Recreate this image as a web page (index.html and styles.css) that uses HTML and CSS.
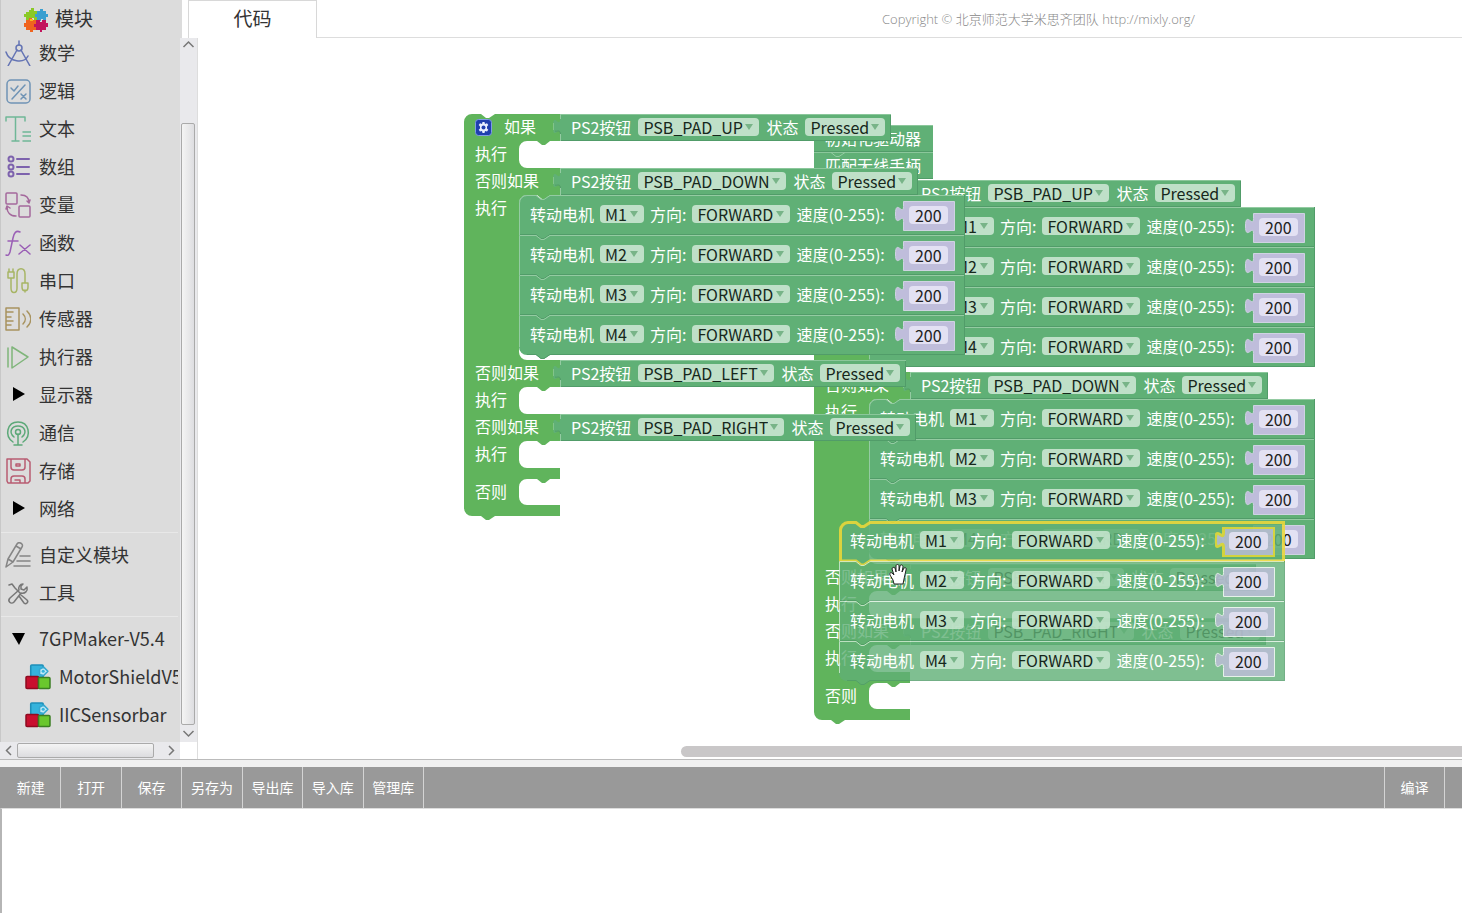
FILE: index.html
```html
<!DOCTYPE html>
<html lang="zh-CN">
<head>
<meta charset="utf-8">
<title>Mixly</title>
<link rel="stylesheet" href="styles.css">
</head>
<body>
<svg class="defs" width="0" height="0" aria-hidden="true">
  <symbol id="stmt" viewBox="0 0 446 45">
    <path class="fill" d="M0 0H17l5 4h3l6-4H446V40H31l-6 4h-3l-5-4H0z"/>
    <path class="dark" d="M445.500 0V39.500H31l-6 4h-3l-5-4H0"/>
    <path class="light" d="M.5 40V.5H17l5 4h3l6-4H445"/>
  </symbol>
  <symbol id="stmt-first" viewBox="0 0 446 45">
    <path class="fill" d="M0 8A8 8 0 0 1 8 0H17l5 4h3l6-4H446V40H31l-6 4h-3l-5-4H0z"/>
    <path class="dark" d="M445.500 0V39.500H31l-6 4h-3l-5-4H0"/>
    <path class="light" d="M.5 40V8A7.500 7.500 0 0 1 8 .5H17l5 4h3l6-4H445"/>
  </symbol>
  <symbol id="stmt-last" viewBox="0 0 446 45">
    <path class="fill" d="M0 0H17l5 4h3l6-4H446V40H31l-6 4h-3l-5-4H8A8 8 0 0 1 0 32z"/>
    <path class="dark" d="M445.500 0V39.500H31l-6 4h-3l-5-4H8"/>
    <path class="light" d="M.5 32V.5H17l5 4h3l6-4H445"/>
  </symbol>
  <symbol id="stmt-picked" viewBox="0 0 446 45">
    <path class="fill picked" d="M1.500 9A8 8 0 0 1 9 1.500H17l5 4h3l6-4H444.500V40H31l-6 4h-3l-5-4H1.500z"/>
  </symbol>
  <symbol id="num" viewBox="0 0 60 30">
    <path class="num-fill" d="M8.500.5H59.500V29.500H8.500V20.500c0-10-8 8-8-7.500s8 2.500 8-7.500z"/>
  </symbol>
  <symbol id="tab" viewBox="0 0 9 27">
    <path class="fill" d="M9 0H8V5c0 10-7-8-7 7.500s7-2.500 7 7.500V27H9z"/>
    <path class="tab-light" d="M1.500 16V9"/>
    <path class="dark" d="M3 17c2 1 5-2 5.500 3"/>
    <path class="light" d="M8.500 0V5M8.500 20V27"/>
  </symbol>
  <symbol id="cubes" viewBox="0 0 25 25">
    <rect x="5.500" y="1" width="12" height="12" rx="1" fill="#35b3dc" stroke="#1f8fb8"/>
    <path d="M14 5l4-2 4 4-4 4-4-1z" fill="#bfe9f7" stroke="#35a8d0"/>
    <circle cx="17.500" cy="7" r="1.500" fill="#35b3dc"/>
    <rect x="1" y="12" width="12" height="11.500" rx="1" fill="#c80f2e" stroke="#8f0a20"/>
    <rect x="13" y="13" width="11" height="10.500" rx="1" fill="#6ac72d" stroke="#3b7e22"/>
  </symbol>
</svg>

<div class="app">
  <header class="topbar">
    <button class="tab tab-modules" type="button">
      <svg width="26" height="26" viewBox="0 0 26 26" aria-hidden="true">
        <path d="M3 5h3V3h2V1h3v3h3v9h-3v-2H9v2H3v-3H1V7h2z" fill="#8ac926"/>
        <path d="M14 4h3V2h3v2h3v3h2v3h-2v4h-3v-2h-2v2h-4v-4h-2V7h2z" fill="#3a9fd0"/>
        <path d="M3 13h3v-2h3v2h4v4h-2v3h2v3h-3v2H7v-2H3v-3H1v-4h2z" fill="#f0641e"/>
        <path d="M13 13h4v2h2v-2h4v3h2v4h-2v3h-4v2h-2v-2h-4v-3h-2v-3h2z" fill="#c3155d"/>
        <path d="M7 12h3v2H7z" fill="#f5b81e"/>
      </svg>
      <span>模块</span>
    </button>
    <button class="tab tab-code" type="button">代码</button>
    <p class="copyright">Copyright © 北京师范大学米思齐团队 http://mixly.org/</p>
  </header>

  <main class="main">
    <aside class="sidebar">
      <nav class="toolbox" aria-label="模块">
        <ul>
          <li><a href="#"><svg class="ic" viewBox="0 0 26 26" stroke="#6474b4"><path d="M14 1v4M12 10L3 26M16 10l9 16M1 12c3 10 18 12 22 4"/><circle cx="14" cy="8" r="3"/></svg>数学</a></li>
          <li><a href="#"><svg class="ic" viewBox="0 0 26 26" stroke="#6f93b5"><rect x="2" y="2" width="23" height="23" rx="4"/><path d="M6 10l3 3 4-5M20 7L7 21M16 16l5 5M21 16l-5 5"/></svg>逻辑</a></li>
          <li><a href="#"><svg class="ic" viewBox="0 0 26 26" stroke="#6fb797"><path d="M1 5V1h19v4M10.500 1v24M7 25h7M18 16h8M18 20h8M18 25h8"/></svg>文本</a></li>
          <li><a href="#"><svg class="ic heavy" viewBox="0 0 26 26" stroke="#7d62ad"><circle cx="6" cy="5" r="2.500"/><circle cx="6" cy="13" r="2.500"/><circle cx="6" cy="20" r="2.500"/><path d="M12 5h12M12 13h12M12 20h12"/></svg>数组</a></li>
          <li><a href="#"><svg class="ic" viewBox="0 0 26 26" stroke="#a4689c"><rect x="1" y="1" width="11" height="11" rx="1"/><rect x="14" y="14" width="11" height="11" rx="1"/><path d="M16 3c5 0 8 3 8 8l-2-2M24 11l1-3M2 15c0 5 3 9 9 9M1 17l1-3 3 2"/></svg>变量</a></li>
          <li><a href="#"><svg class="ic" viewBox="0 0 26 26" stroke="#9a5fb5"><path d="M15 2c-4-2-6 1-7 6L5 22c-1 3-2 4-4 3M3 11h10M15 15l10 9M25 15l-11 9"/></svg>函数</a></li>
          <li><a href="#"><svg class="ic" viewBox="0 0 26 26" stroke="#a7b565"><path d="M3 4h6v6H3zM4 1v3M8 1v3M6 10v10c0 6 6 6 6 0V6c0-7 8-7 8 0v9M17 15h6v4c0 5-6 5-6 0zM20 22v2"/></svg>串口</a></li>
          <li><a href="#"><svg class="ic" viewBox="0 0 26 26" stroke="#a8935f"><path d="M1 2h13v22H1zM1 6h7M1 11h5M1 15h7M1 19h5M18 8c3 3 3 7 0 10M22 5c5 5 5 11 0 16"/></svg>传感器</a></li>
          <li><a href="#"><svg class="ic" viewBox="0 0 26 26" stroke="#7fb57a"><path d="M3 4v19M7 3v21l16-11z"/></svg>执行器</a></li>
          <li><a href="#"><svg class="ic" viewBox="0 0 26 26"><path d="M8 5l12 7-12 7z" fill="#000"/></svg>显示器</a></li>
          <li><a href="#"><svg class="ic" viewBox="0 0 26 26" stroke="#5ca878"><path d="M8 22c-9-6-6-20 5-20s14 14 5 20M9 17c-6-5-2-11 4-11s10 6 4 11M13 14v11M9 25h8"/><circle cx="13" cy="12" r="2.500"/></svg>通信</a></li>
          <li><a href="#"><svg class="ic" viewBox="0 0 26 26" stroke="#b85c72"><path d="M2 1h20l3 3v19l-2 2H3l-1-2zM6 1v8c0 2 1 3 3 3h8c2 0 3-1 3-3V1M6 25v-4c0-2 1-3 3-3h8c2 0 3 1 3 3v4M10 22h5v3"/><path d="M11 6h4v2h-4z"/></svg>存储</a></li>
          <li><a href="#"><svg class="ic" viewBox="0 0 26 26"><path d="M8 5l12 7-12 7z" fill="#000"/></svg>网络</a></li>
          <li class="sep" role="separator"></li>
          <li><a href="#"><svg class="ic" viewBox="0 0 26 26" stroke="#858585"><path d="M1 25l2-8L12 2c2-3 7 0 5 3L8 20zM11 4l5 3M3 17l5 3M15 14h10M12 19h13M9 24h16"/></svg>自定义模块</a></li>
          <li><a href="#"><svg class="ic" viewBox="0 0 26 26" stroke="#777"><path d="M4 5l3-1 3 4 5 5M16 15l6 5c2 2-1 5-3 3l-5-7M18 4c-3 0-5 3-4 6L5 18c-3 3 1 7 4 4l7-9c4 1 7-2 6-6l-3 3-3-1 0-3z"/></svg>工具</a></li>
          <li class="sep" role="separator"></li>
          <li><a href="#"><svg class="ic" viewBox="0 0 26 26"><path d="M7 7h13l-6 12z" fill="#000"/></svg>7GPMaker-V5.4</a></li>
          <li class="child"><a href="#"><svg class="ic" viewBox="0 0 25 25"><use href="#cubes"/></svg>MotorShieldV5.4</a></li>
          <li class="child"><a href="#"><svg class="ic" viewBox="0 0 25 25"><use href="#cubes"/></svg>IICSensorbar</a></li>
        </ul>
      </nav>
      <div class="vscroll" aria-hidden="true">
        <svg width="17" height="17"><path d="M3.500 9l5-5 5 5"/></svg>
        <span class="vgap"></span><span class="vthumb"></span>
        <svg width="17" height="17"><path d="M3.500 6l5 5 5-5"/></svg>
      </div>
      <div class="hscroll" aria-hidden="true">
        <svg width="17" height="17"><path d="M11 4L6.500 8.500 11 13"/></svg>
        <span class="hthumb"></span>
        <svg width="17" height="17"><path d="M9 4l4.500 4.500L9 13"/></svg>
      </div>
    </aside>

    <section class="workspace" aria-label="工作区">
      <div class="stack stack-back">
        <div class="plain">初始化驱动器</div>
        <div class="plain">匹配无线手柄<svg class="seam" width="14" height="5"><path d="M0 .5l5 4h3l6-4"/></svg></div>
        <div class="ifblock">
          <svg class="shape" width="96" height="546"><path class="if-fill" d="M0 0H96V27H86l-5 4h-3l-5-4H63a8 8 0 0 0-8 8v149a8 8 0 0 0 8 8H96V219H86l-5 4h-3l-5-4H63a8 8 0 0 0-8 8v149a8 8 0 0 0 8 8H96V411H86l-5 4h-3l-5-4H63a8 8 0 0 0-8 8v11a8 8 0 0 0 8 8H96V465H86l-5 4h-3l-5-4H63a8 8 0 0 0-8 8v11a8 8 0 0 0 8 8H96V503H86l-5 4h-3l-5-4H63a8 8 0 0 0-8 8v10a8 8 0 0 0 8 8H96V540H31l-6 4h-3l-5-4H8A8 8 0 0 1 0 532z"/></svg>
          <div class="row"><span class="lab">如果</span><div class="cond"><svg class="ctab" width="9" height="27"><use href="#tab"/></svg>PS2按钮<span class="dd"><select aria-label="按钮"><option>PSB_PAD_UP</option></select></span>状态<span class="dd"><select aria-label="状态"><option>Pressed</option></select></span></div></div>
          <div class="row do full"><span class="lab">执行</span><div class="body">
            <div class="motor"><svg class="shape" width="446" height="45"><use href="#stmt-first"/></svg>转动电机<span class="dd"><select aria-label="电机"><option>M1</option></select></span>方向:<span class="dd"><select aria-label="方向"><option>FORWARD</option></select></span>速度(0-255):<span class="num"><svg class="shape" width="60" height="30"><use href="#num"/></svg><input aria-label="速度" value="200"></span></div>
            <div class="motor"><svg class="shape" width="446" height="45"><use href="#stmt"/></svg>转动电机<span class="dd"><select aria-label="电机"><option>M2</option></select></span>方向:<span class="dd"><select aria-label="方向"><option>FORWARD</option></select></span>速度(0-255):<span class="num"><svg class="shape" width="60" height="30"><use href="#num"/></svg><input aria-label="速度" value="200"></span></div>
            <div class="motor"><svg class="shape" width="446" height="45"><use href="#stmt"/></svg>转动电机<span class="dd"><select aria-label="电机"><option>M3</option></select></span>方向:<span class="dd"><select aria-label="方向"><option>FORWARD</option></select></span>速度(0-255):<span class="num"><svg class="shape" width="60" height="30"><use href="#num"/></svg><input aria-label="速度" value="200"></span></div>
            <div class="motor"><svg class="shape" width="446" height="45"><use href="#stmt-last"/></svg>转动电机<span class="dd"><select aria-label="电机"><option>M4</option></select></span>方向:<span class="dd"><select aria-label="方向"><option>FORWARD</option></select></span>速度(0-255):<span class="num"><svg class="shape" width="60" height="30"><use href="#num"/></svg><input aria-label="速度" value="200"></span></div>
          </div></div>
          <div class="row"><span class="lab">否则如果</span><div class="cond"><svg class="ctab" width="9" height="27"><use href="#tab"/></svg>PS2按钮<span class="dd"><select aria-label="按钮"><option>PSB_PAD_DOWN</option></select></span>状态<span class="dd"><select aria-label="状态"><option>Pressed</option></select></span></div></div>
          <div class="row do full"><span class="lab">执行</span><div class="body">
            <div class="motor"><svg class="shape" width="446" height="45"><use href="#stmt-first"/></svg>转动电机<span class="dd"><select aria-label="电机"><option>M1</option></select></span>方向:<span class="dd"><select aria-label="方向"><option>FORWARD</option></select></span>速度(0-255):<span class="num"><svg class="shape" width="60" height="30"><use href="#num"/></svg><input aria-label="速度" value="200"></span></div>
            <div class="motor"><svg class="shape" width="446" height="45"><use href="#stmt"/></svg>转动电机<span class="dd"><select aria-label="电机"><option>M2</option></select></span>方向:<span class="dd"><select aria-label="方向"><option>FORWARD</option></select></span>速度(0-255):<span class="num"><svg class="shape" width="60" height="30"><use href="#num"/></svg><input aria-label="速度" value="200"></span></div>
            <div class="motor"><svg class="shape" width="446" height="45"><use href="#stmt"/></svg>转动电机<span class="dd"><select aria-label="电机"><option>M3</option></select></span>方向:<span class="dd"><select aria-label="方向"><option>FORWARD</option></select></span>速度(0-255):<span class="num"><svg class="shape" width="60" height="30"><use href="#num"/></svg><input aria-label="速度" value="200"></span></div>
            <div class="motor"><svg class="shape" width="446" height="45"><use href="#stmt-last"/></svg>转动电机<span class="dd"><select aria-label="电机"><option>M4</option></select></span>方向:<span class="dd"><select aria-label="方向"><option>FORWARD</option></select></span>速度(0-255):<span class="num"><svg class="shape" width="60" height="30"><use href="#num"/></svg><input aria-label="速度" value="200"></span></div>
          </div></div>
          <div class="row"><span class="lab">否则如果</span><div class="cond"><svg class="ctab" width="9" height="27"><use href="#tab"/></svg>PS2按钮<span class="dd"><select aria-label="按钮"><option>PSB_PAD_LEFT</option></select></span>状态<span class="dd"><select aria-label="状态"><option>Pressed</option></select></span></div></div>
          <div class="row do"><span class="lab">执行</span></div>
          <div class="row"><span class="lab">否则如果</span><div class="cond"><svg class="ctab" width="9" height="27"><use href="#tab"/></svg>PS2按钮<span class="dd"><select aria-label="按钮"><option>PSB_PAD_RIGHT</option></select></span>状态<span class="dd"><select aria-label="状态"><option>Pressed</option></select></span></div></div>
          <div class="row do"><span class="lab">执行</span></div>
          <div class="row else"><span class="lab">否则</span></div>
        </div>
      </div>

      <div class="stack stack-front">
        <div class="ifblock">
          <svg class="shape" width="96" height="408"><path class="if-fill" d="M0 8A8 8 0 0 1 8 0H17l5 4h3l6-4H96V27H86l-5 4h-3l-5-4H63a8 8 0 0 0-8 8v11a8 8 0 0 0 8 8H96V81H86l-5 4h-3l-5-4H63a8 8 0 0 0-8 8v149a8 8 0 0 0 8 8H96V273H86l-5 4h-3l-5-4H63a8 8 0 0 0-8 8v11a8 8 0 0 0 8 8H96V327H86l-5 4h-3l-5-4H63a8 8 0 0 0-8 8v11a8 8 0 0 0 8 8H96V365H86l-5 4h-3l-5-4H63a8 8 0 0 0-8 8v10a8 8 0 0 0 8 8H96V402H31l-6 4h-3l-5-4H8A8 8 0 0 1 0 394z"/></svg>
          <div class="row"><span class="lab"><button class="gear" type="button" aria-label="设置"><svg width="17" height="17" viewBox="0 0 17 17"><rect x=".5" y=".5" width="16" height="16" rx="3" fill="#1f3fae" stroke="#7f9be6"/><path d="M7.500 3h2l.5 2 2-.8 1.300 1.800L12 7.500v2l1.300 1.300L12 12.600l-2-.6-.5 2h-2L7 12l-2 .6-1.300-1.800L5 9.500v-2L3.700 6 5 4.200 7 5z" fill="#e8eeff"/><circle cx="8.500" cy="8.500" r="2" fill="#1f3fae"/></svg></button>如果</span><div class="cond"><svg class="ctab" width="9" height="27"><use href="#tab"/></svg>PS2按钮<span class="dd"><select aria-label="按钮"><option>PSB_PAD_UP</option></select></span>状态<span class="dd"><select aria-label="状态"><option>Pressed</option></select></span></div></div>
          <div class="row do"><span class="lab">执行</span></div>
          <div class="row"><span class="lab">否则如果</span><div class="cond"><svg class="ctab" width="9" height="27"><use href="#tab"/></svg>PS2按钮<span class="dd"><select aria-label="按钮"><option>PSB_PAD_DOWN</option></select></span>状态<span class="dd"><select aria-label="状态"><option>Pressed</option></select></span></div></div>
          <div class="row do full"><span class="lab">执行</span><div class="body">
            <div class="motor"><svg class="shape" width="446" height="45"><use href="#stmt-first"/></svg>转动电机<span class="dd"><select aria-label="电机"><option>M1</option></select></span>方向:<span class="dd"><select aria-label="方向"><option>FORWARD</option></select></span>速度(0-255):<span class="num"><svg class="shape" width="60" height="30"><use href="#num"/></svg><input aria-label="速度" value="200"></span></div>
            <div class="motor"><svg class="shape" width="446" height="45"><use href="#stmt"/></svg>转动电机<span class="dd"><select aria-label="电机"><option>M2</option></select></span>方向:<span class="dd"><select aria-label="方向"><option>FORWARD</option></select></span>速度(0-255):<span class="num"><svg class="shape" width="60" height="30"><use href="#num"/></svg><input aria-label="速度" value="200"></span></div>
            <div class="motor"><svg class="shape" width="446" height="45"><use href="#stmt"/></svg>转动电机<span class="dd"><select aria-label="电机"><option>M3</option></select></span>方向:<span class="dd"><select aria-label="方向"><option>FORWARD</option></select></span>速度(0-255):<span class="num"><svg class="shape" width="60" height="30"><use href="#num"/></svg><input aria-label="速度" value="200"></span></div>
            <div class="motor"><svg class="shape" width="446" height="45"><use href="#stmt-last"/></svg>转动电机<span class="dd"><select aria-label="电机"><option>M4</option></select></span>方向:<span class="dd"><select aria-label="方向"><option>FORWARD</option></select></span>速度(0-255):<span class="num"><svg class="shape" width="60" height="30"><use href="#num"/></svg><input aria-label="速度" value="200"></span></div>
          </div></div>
          <div class="row"><span class="lab">否则如果</span><div class="cond"><svg class="ctab" width="9" height="27"><use href="#tab"/></svg>PS2按钮<span class="dd"><select aria-label="按钮"><option>PSB_PAD_LEFT</option></select></span>状态<span class="dd"><select aria-label="状态"><option>Pressed</option></select></span></div></div>
          <div class="row do"><span class="lab">执行</span></div>
          <div class="row"><span class="lab">否则如果</span><div class="cond"><svg class="ctab" width="9" height="27"><use href="#tab"/></svg>PS2按钮<span class="dd"><select aria-label="按钮"><option>PSB_PAD_RIGHT</option></select></span>状态<span class="dd"><select aria-label="状态"><option>Pressed</option></select></span></div></div>
          <div class="row do"><span class="lab">执行</span></div>
          <div class="row else"><span class="lab">否则</span></div>
        </div>
      </div>

      <div class="stack stack-drag">
        <div class="motor selected"><svg class="shape" width="446" height="45"><use href="#stmt-picked"/></svg>转动电机<span class="dd"><select aria-label="电机"><option>M1</option></select></span>方向:<span class="dd"><select aria-label="方向"><option>FORWARD</option></select></span>速度(0-255):<span class="num"><svg class="shape" width="60" height="30"><use href="#num"/></svg><input aria-label="速度" value="200"></span></div>
        <div class="motor"><svg class="shape" width="446" height="45"><use href="#stmt"/></svg>转动电机<span class="dd"><select aria-label="电机"><option>M2</option></select></span>方向:<span class="dd"><select aria-label="方向"><option>FORWARD</option></select></span>速度(0-255):<span class="num"><svg class="shape" width="60" height="30"><use href="#num"/></svg><input aria-label="速度" value="200"></span></div>
        <div class="motor"><svg class="shape" width="446" height="45"><use href="#stmt"/></svg>转动电机<span class="dd"><select aria-label="电机"><option>M3</option></select></span>方向:<span class="dd"><select aria-label="方向"><option>FORWARD</option></select></span>速度(0-255):<span class="num"><svg class="shape" width="60" height="30"><use href="#num"/></svg><input aria-label="速度" value="200"></span></div>
        <div class="motor"><svg class="shape" width="446" height="45"><use href="#stmt-last"/></svg>转动电机<span class="dd"><select aria-label="电机"><option>M4</option></select></span>方向:<span class="dd"><select aria-label="方向"><option>FORWARD</option></select></span>速度(0-255):<span class="num"><svg class="shape" width="60" height="30"><use href="#num"/></svg><input aria-label="速度" value="200"></span></div>
      </div>

      <svg class="hand" width="19" height="21" viewBox="0 0 19 21" aria-hidden="true"><path d="M5 20l-1-4-3-5c-1-2 1-3 2-2l2 2-2-6c0-2 2-2 3-1l1 4V2c0-2 3-2 3 0v5l1-5c1-2 3-1 3 1l-1 5 2-4c1-1 3 0 2 2l-2 9-1 5z" fill="#fff" stroke="#222"/></svg>
      <div class="canvas-scroll" aria-hidden="true"></div>
    </section>
  </main>

  <div class="splitter"></div>
  <div class="toolbar" role="toolbar" aria-label="工具栏">
    <div class="group">
      <button type="button">新建</button><button type="button">打开</button><button type="button">保存</button><button type="button">另存为</button><button type="button">导出库</button><button type="button">导入库</button><button type="button">管理库</button>
    </div>
    <div class="group group-right">
      <button type="button">编译</button>
    </div>
  </div>
  <section class="output" aria-label="输出"></section>
</div>
</body>
</html>
```
FILE: styles.css
```css
* { box-sizing: border-box; }

body {
  margin: 0;
  font-family: "Noto Sans CJK SC", sans-serif;
  font-size: 16px;
  color: #333;
  background: #fff;
}

button, select, input { font: inherit; color: inherit; margin: 0; border: 0; }

.defs { position: absolute; }

.app { display: flex; flex-direction: column; height: 100vh; overflow: hidden; }

/* top bar */
.topbar { display: flex; flex: none; height: 38px; }
.tab { height: 38px; padding: 0 0 4px; font-size: 19px; background: #fff; }
.tab-modules {
  display: flex; align-items: center; gap: 6px;
  width: 182px; padding-left: 22px; margin-right: 6px;
  background: #dcdcdc; border-left: 1px solid #c8c8c8;
}
.tab-modules svg { margin-top: 5px; }
.tab-code { width: 129px; border: 1px solid #d8d8d8; border-bottom: 0; }
.copyright {
  flex: 1; margin: 0; padding-right: 267px;
  font: 300 13px/38px "Open Sans", "Noto Sans CJK SC", sans-serif;
  color: #888; text-align: right; white-space: nowrap;
  border-bottom: 1px solid #ddd;
}

/* sidebar */
.main { display: flex; flex: 722 1 0; min-height: 0; }
.sidebar {
  display: grid; flex: none; width: 198px;
  grid-template: minmax(0, 1fr) 17px / 180px 17px;
  border-right: 1px solid #ddd;
}
.toolbox { overflow: hidden; padding-right: 2px; background: #dcdcdc; border-left: 1px solid #c8c8c8; }
.toolbox ul { margin: -4px 0 0; padding: 0; list-style: none; overflow: hidden; }
.toolbox a {
  display: flex; align-items: center; gap: 8px;
  height: 38px; padding: 0 0 2px 4px;
  font-size: 18px; color: #333; text-decoration: none; white-space: nowrap;
}
.toolbox .child a { padding-left: 24px; }
.ic { flex: none; width: 26px; height: 26px; margin-top: 2px; fill: none; stroke-width: 1.500; stroke-linecap: round; stroke-linejoin: round; }
.ic.heavy { stroke-width: 2; }
.sep { height: 8px; padding-top: 4px; }
.sep::before { content: ""; display: block; height: 1px; background: #e8e8e8; }

.vscroll { display: flex; flex-direction: column; background: #e9e9ec; }
.vscroll svg, .hscroll svg { flex: none; fill: none; stroke: #777; stroke-width: 1.500; }
.vgap { flex: 68; }
.vthumb { flex: 602; margin: 0 2px 0 1px; background: linear-gradient(90deg, #f4f4f4, #dedee1); border: 1px solid #aaa; border-radius: 2px; }
.hscroll { display: flex; align-items: center; background: #e9e9ec; padding-right: 3px; }
.hthumb { flex: none; width: 137px; height: 15px; margin-right: 6px; background: linear-gradient(#f4f4f4, #dcdcdf); border: 1px solid #aaa; border-radius: 2px; }

/* canvas */
.workspace { position: relative; flex: 1; min-width: 0; overflow: hidden; color: #fff; }
.stack { position: absolute; white-space: nowrap; }
.stack-front { left: 266px; top: 76px; }
.stack-back { left: 616px; top: 87px; }

.shape { position: absolute; left: 0; top: 0; z-index: -1; overflow: visible; }
.fill { fill: #60b076; }
.light { fill: none; stroke: var(--edge, #94cba2); }
.tab-light { fill: none; stroke: #83c48a; }
.dark { fill: none; stroke: #519c69; }
.if-fill { fill: #60b45c; }
.picked { stroke: #ecd83a; stroke-width: 3; }
.num-fill { fill: #bfbddb; stroke: var(--num-stroke, #cfd3e2); stroke-width: var(--num-line, 1); }

.plain {
  position: relative; width: 119px; height: 27px; padding-left: 11px; line-height: 24px;
  background: #60b076; border-top: 1px solid #8bc79b; border-bottom: 1px solid #519c69;
}
.seam { position: absolute; left: 17px; top: -1px; fill: none; stroke: #94cba2; }

.ifblock { position: relative; isolation: isolate; padding-bottom: 11px; }
.stack-back .ifblock { margin-top: 1px; }
.row { display: flex; height: 27px; line-height: 24px; }
.lab { display: flex; align-items: center; gap: 12px; flex: none; width: 96px; height: 24px; padding-left: 11px; }
.do .lab { width: 55px; }
.full { height: 165px; }
.else { height: 26px; margin-top: 11px; }
.gear { display: flex; padding: 0; margin-top: 2px; background: none; }

.cond {
  position: relative; display: flex; align-items: center; gap: 7px;
  height: 27px; padding: 0 6px 2px 11px;
  background: #60b076;
  box-shadow: inset 0 1px #8bc79b, inset -1px -1px #519c69;
}
.ctab { position: absolute; left: -8px; top: 0; }

.motor {
  position: relative; isolation: isolate;
  display: flex; align-items: center; gap: 6px;
  width: 446px; height: 40px; padding: 0 0 2px 11px;
}
.dd { position: relative; display: flex; color: #16271b; }
.dd::after {
  content: ""; position: absolute; right: 6px; top: 6px;
  border: solid transparent; border-width: 6px 4px 0; border-top-color: #78b488;
  pointer-events: none;
}
.dd select {
  appearance: none; height: 18px; padding: 0 17px 0 5px; line-height: 18px;
  background: #bfe0c8; border-radius: 4px;
}
.cond .dd select { padding-right: 16px; }
.num { position: relative; isolation: isolate; display: flex; width: 60px; height: 30px; padding: 5px 0 0 14px; margin: 3px 0 0 4px; }
.num input { width: 39px; height: 18px; padding: 0; line-height: 18px; text-align: center; color: #222; background: #e3e1f3; border-radius: 4px; }

/* stack being dragged: see-through shapes under solid labels */
.stack-drag { left: 641px; top: 483px; --num-stroke: #fff; --edge: #d4ecd9; }
.stack-drag .shape { opacity: .8; }
.stack-drag .dd select { background: rgb(200 230 208 / .85); }
.stack-drag .num input { background: rgb(230 228 244 / .85); }
.stack-drag .selected > .shape { opacity: .88; }
.selected { --num-stroke: #f0dc30; --num-line: 3; }

.hand { position: absolute; left: 691px; top: 526px; }
.canvas-scroll { position: absolute; left: 483px; right: -12px; bottom: 2px; height: 11px; border-radius: 6px; background: #c9c7c8; }

/* bottom */
.splitter { flex: none; height: 8px; background: #f0f0f0; border-top: 1px solid #bbb; }
.toolbar { display: flex; justify-content: space-between; flex: none; height: 41px; padding-left: 1px; background: #999; }
.group { display: grid; grid-auto-flow: column; grid-auto-columns: 1fr; width: 423px; }
.group-right { width: 61px; margin-right: 17px; border-left: 1px solid #d4d4d4; }
.toolbar button { padding: 0 0 1px; font-size: 14px; color: #fff; background: none; border-right: 1px solid #d4d4d4; }
.output { flex: 104 1 0; min-height: 0; border-left: 2px solid #b5b5b5; border-top: 1px solid #ddd; }
```
